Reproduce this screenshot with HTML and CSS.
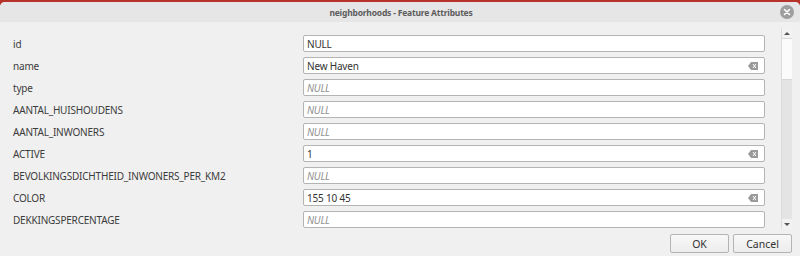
FILE: index.html
```html
<!DOCTYPE html>
<html>
<head>
<meta charset="utf-8">
<link rel="stylesheet" href="styles.css">
</head>
<body>
<div class="window">
  <div class="titlebar">
    <span class="title">neighborhoods - Feature Attributes</span>
    <span class="close">
      <svg width="14" height="14" viewBox="0 0 14 14"><circle cx="7" cy="7" r="7" fill="#9e9e9e"/><path d="M4.5 4.5 L9.5 9.5 M9.5 4.5 L4.5 9.5" stroke="#fff" stroke-width="1.6" stroke-linecap="round"/></svg>
    </span>
  </div>
  <div class="content">
    <div class="form">
      <div class="label">id</div>
      <div class="field"><span class="val">NULL</span></div>
      <div class="label">name</div>
      <div class="field"><span class="val">New Haven</span><span class="clear"><svg width="10" height="8" viewBox="0 0 10 8"><path d="M3 0 H10 V8 H3 L0 4 Z" fill="#9a9a9a"/><path d="M5 2 L8 6 M8 2 L5 6" stroke="#fff" stroke-width="1"/></svg></span></div>
      <div class="label">type</div>
      <div class="field"><span class="null">NULL</span></div>
      <div class="label">AANTAL_HUISHOUDENS</div>
      <div class="field"><span class="null">NULL</span></div>
      <div class="label">AANTAL_INWONERS</div>
      <div class="field"><span class="null">NULL</span></div>
      <div class="label">ACTIVE</div>
      <div class="field"><span class="val">1</span><span class="clear"><svg width="10" height="8" viewBox="0 0 10 8"><path d="M3 0 H10 V8 H3 L0 4 Z" fill="#9a9a9a"/><path d="M5 2 L8 6 M8 2 L5 6" stroke="#fff" stroke-width="1"/></svg></span></div>
      <div class="label">BEVOLKINGSDICHTHEID_INWONERS_PER_KM2</div>
      <div class="field"><span class="null">NULL</span></div>
      <div class="label">COLOR</div>
      <div class="field"><span class="val">155 10 45</span><span class="clear"><svg width="10" height="8" viewBox="0 0 10 8"><path d="M3 0 H10 V8 H3 L0 4 Z" fill="#9a9a9a"/><path d="M5 2 L8 6 M8 2 L5 6" stroke="#fff" stroke-width="1"/></svg></span></div>
      <div class="label">DEKKINGSPERCENTAGE</div>
      <div class="field"><span class="null">NULL</span></div>
    </div>
    <div class="scrollbar">
      <div class="arrow up"></div>
      <div class="thumb"></div>
      <div class="track"></div>
      <div class="arrow down"></div>
    </div>
  </div>
  <div class="footer">
    <button class="btn ok">OK</button>
    <button class="btn cancel">Cancel</button>
  </div>
</div>
</body>
</html>
```
FILE: styles.css
```css
html, body {
  margin: 0;
  padding: 0;
}
body {
  width: 800px;
  height: 256px;
  background: #b8322c;
  overflow: hidden;
  font-family: "Noto Sans", sans-serif;
}
.window {
  margin-top: 2px;
  height: 254px;
  background: #f0f0f0;
  border-radius: 5px 5px 0 0;
  display: flex;
  flex-direction: column;
}
.titlebar {
  height: 20px;
  background: #e6e6e6;
  border-radius: 5px 5px 0 0;
  display: flex;
  align-items: center;
  justify-content: center;
  position: relative;
}
.title {
  font-size: 8.5px;
  font-weight: bold;
  color: #5c5c5c;
  letter-spacing: -0.2px;
  margin-left: 2px;
}
.close {
  position: absolute;
  right: 6px;
  top: 3px;
  width: 14px;
  height: 14px;
  display: flex;
}
.content {
  display: flex;
  height: 201px;
  margin-top: 6px;
}
.form {
  flex: 1;
  display: grid;
  grid-template-columns: 290px 462px;
  grid-auto-rows: 17px;
  row-gap: 5px;
  padding: 7px 0 0 13px;
  align-content: start;
}
.label {
  font-size: 10px;
  letter-spacing: -0.2px;
  color: #3c3c3c;
  display: flex;
  align-items: center;
  line-height: 17px;
  padding-top: 1px;
}
.field {
  box-sizing: border-box;
  height: 17px;
  background: #fff;
  border: 1px solid #b4b4b4;
  border-radius: 2px;
  display: flex;
  align-items: center;
  justify-content: space-between;
  padding: 0 5px 0 3px;
  font-size: 10px;
  letter-spacing: -0.2px;
}
.val {
  color: #333;
}
.null {
  color: #909090;
  font-style: italic;
}
.clear {
  display: flex;
  margin-right: 1px;
}
.scrollbar {
  width: 10px;
  margin-right: 8px;
  display: flex;
  flex-direction: column;
  border-left: 1px solid #dcdcdc;
  background: #f2f2f2;
}
.arrow {
  height: 10px;
  display: flex;
  align-items: center;
  justify-content: center;
}
.arrow::after {
  content: "";
  width: 0;
  height: 0;
  border-left: 3px solid transparent;
  border-right: 3px solid transparent;
}
.up::after {
  border-bottom: 3px solid #555;
}
.down::after {
  border-top: 3px solid #555;
}
.thumb {
  height: 40px;
  background: #fbfbfb;
  border-top: 1px solid #d8d8d8;
  border-bottom: 1px solid #d8d8d8;
}
.track {
  flex: 1;
  background: #e4e4e4;
}
.footer {
  display: flex;
  justify-content: flex-end;
  gap: 4px;
  padding: 5px 8px 0 0;
}
.btn {
  box-sizing: border-box;
  height: 19px;
  border: 1px solid #b4b4b4;
  border-radius: 2px;
  background: linear-gradient(#f8f8f8, #ececec);
  font-family: "Noto Sans", sans-serif;
  font-size: 10.5px;
  color: #333;
  padding: 0;
}
.ok { width: 59px; }
.cancel { width: 59px; }
```
